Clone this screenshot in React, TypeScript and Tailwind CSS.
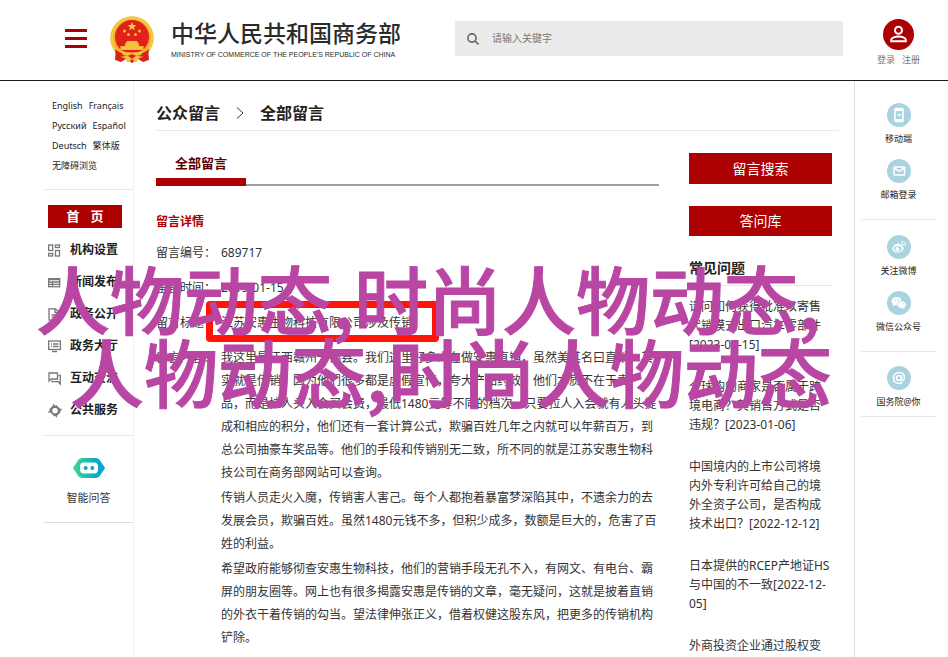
import React from "react";

const cjk = "font-['Noto_Sans','Noto_Sans_CJK_SC',sans-serif]";

function Emblem() {
  return (
    <svg viewBox="0 0 44 47" className="h-[47px] w-11 shrink-0" role="img" aria-label="国徽">
      <path d="M6 32 L5 44 L11 46 L16 43 L22 47 L28 43 L33 46 L39 44 L38 32Z" fill="#d8221c" />
      <circle cx="22" cy="22" r="21.7" fill="#eeb52a" />
      <circle cx="22" cy="22" r="20" fill="none" stroke="#f6cf45" strokeWidth="2" strokeDasharray="3.500 .6" />
      <circle cx="22" cy="21" r="17" fill="#e3211b" />
      <path d="M5 33 Q13 40 22 37 Q31 40 39 33 L38 39 Q30 42 27 39 L22 43 L17 39 Q14 42 6 39Z" fill="#d8221c" />
      <path d="M22 6l1.200 3 3.100.2-2.400 2 .8 3.100-2.700-1.700-2.700 1.700.8-3.100-2.400-2 3.100-.2z" fill="#f8d146" />
      <g fill="#f3c13a">
        <circle cx="14.500" cy="15" r="1.500" />
        <circle cx="29.500" cy="15" r="1.500" />
        <circle cx="18.500" cy="18.500" r="1.500" />
        <circle cx="25.500" cy="18.500" r="1.500" />
        <path d="M17 25h10l1.500 2.500h-13zM15 27.500h14v2.500H15zM10.500 30h23v4h-23z" />
      </g>
      <path d="M10 34Q22 39 34 34L31 39Q26 41 22 38 Q18 41 13 39Z" fill="#f3c13a" />
      <path d="M16 42q3-2 5 1l-1 3h-3zM28 42q-3-2-5 1l1 3h3z" fill="#f3c13a" />
    </svg>
  );
}

function PersonIcon() {
  return (
    <svg viewBox="0 0 31 31" className="size-[31px]" aria-hidden="true">
      <circle cx="15.500" cy="15.500" r="15.500" fill="#ad0000" />
      <circle cx="15.500" cy="11.300" r="3.500" fill="none" stroke="#fff" strokeWidth="2" />
      <path d="M8.200 22.300v-1.500c0-2 4.200-3.300 7.300-3.300s7.300 1.300 7.300 3.300v1.500z" fill="none" stroke="#fff" strokeWidth="2" />
    </svg>
  );
}

const navIcons: Record<string, React.ReactNode> = {
  grid: (
    <g>
      <rect x=".7" y="1" width="4" height="5.500" />
      <rect x="7.500" y="1" width="4" height="2.500" />
      <rect x=".7" y="9.500" width="4" height="2.500" />
      <rect x="7.500" y="6.500" width="4" height="5.500" />
    </g>
  ),
  news: (
    <g>
      <rect x=".7" y="2.700" width="11" height="8" />
      <path d="M1 3.700h10.500M1 6h10.500M1 8.300h10.500M4.500 6v4" />
    </g>
  ),
  doc: (
    <g>
      <path d="M1 .8h6.500L11 4v8.200H1z" />
      <path d="M7 1v3.500h4M3.500 7h4.500M3.500 9.200h4.500" />
    </g>
  ),
  hall: (
    <g>
      <rect x=".7" y="1" width="11.600" height="8.500" />
      <path d="M3 4h1M5 4h5.500M3 6.500h1M5 6.500h5.500M4 11.500h5" />
    </g>
  ),
  chat: (
    <g>
      <path d="M1 9V1h8.500v6H3z" />
      <path d="M10.500 3.500h1.800V12l-2-2.300H4V8.500" />
    </g>
  ),
  service: (
    <g fill="#777" stroke="none">
      <path d="M1 5.500L5 1.500V-.5L8.500 3 6.500 5V3.800L3.500 6.800z" />
      <path d="M8 .8L12 4.800h2.500L11 8.300 9 6.300h1.200L6.800 3z" />
      <path d="M13 7.800L9 11.800v2L5.500 10.500l2-2v1.200l3.200-3.200z" />
      <path d="M6.500 12.500L2.500 8.500H-.5L3.200 5l2 2H4l3.500 3.500z" />
      <circle cx="7" cy="6.700" r="2.600" fill="#fff" />
    </g>
  ),
};

const nav = [
  ["grid", "机构设置"],
  ["news", "新闻发布"],
  ["doc", "政务公开"],
  ["hall", "政务大厅"],
  ["chat", "互动交流"],
  ["service", "公共服务"],
];

const languages = [["English", "Français"], ["Русский", "Español"], ["Deutsch", "繁体版"], ["无障碍浏览"]];

function Sidebar() {
  return (
    <aside className="flex w-[134px] shrink-0 flex-col border-r border-[#f0f0f0] pl-11">
      <div className="flex h-[109px] flex-col border-b border-[#e6e6e6] pt-[15px] pl-2 text-[9px] leading-5 text-[#222]">
        {languages.map((row) => (
          <div key={row[0]} className="flex gap-[6px] whitespace-nowrap">
            {row.map((l) => (
              <a key={l} href="#">{l}</a>
            ))}
          </div>
        ))}
      </div>
      <nav className="border-b border-[#e6e6e6] pt-[15px] pb-[9px] pl-1">
        <a href="#" className="mb-[6px] flex h-[23px] w-[74px] items-center justify-center gap-[11px] bg-[#ad0000] text-[13px] font-bold text-white">
          <span>首</span>
          <span>页</span>
        </a>
        {nav.map(([icon, label]) => (
          <a key={label} href="#" className="flex h-8 items-center gap-[9px] text-xs font-bold text-[#222]">
            <svg viewBox="0 0 13 13" className="size-[13px] overflow-visible" fill="none" stroke="#777" strokeWidth="1.300" aria-hidden="true">
              {navIcons[icon]}
            </svg>
            {label}
          </a>
        ))}
      </nav>
      <a href="#" className="flex h-[87px] flex-col items-center border-b border-[#dcdcdc] pt-[22px] text-[11px] text-[#333]">
        <svg viewBox="0 0 32 20" className="mb-3 h-5 w-8" aria-hidden="true">
          <defs>
            <linearGradient id="bot">
              <stop offset="0" stopColor="#45d68a" />
              <stop offset=".65" stopColor="#0aaec6" />
              <stop offset="1" stopColor="#06a8d0" />
            </linearGradient>
          </defs>
          <path d="M9 0h14q2 0 3.500 1.800L31.500 9q.8 1 0 2l-5 7.200Q25 20 23 20H9q-2 0-3.500-1.800L.5 11q-.8-1 0-2l5-7.200Q7 0 9 0z" fill="url(#bot)" />
          <rect x="7" y="4.500" width="18" height="11" rx="4" fill="#fff" />
          <circle cx="12.700" cy="10" r="2" fill="#0aa9bd" />
          <circle cx="19.300" cy="10" r="2" fill="#0aa9bd" />
        </svg>
        智能问答
      </a>
    </aside>
  );
}

const badges: Record<string, React.ReactNode> = {
  phone: (
    <g>
      <rect x="8" y="5.500" width="8" height="13" rx="1" fill="none" stroke="#fff" strokeWidth="1.600" />
      <path d="M8 7h8M8 17h8" stroke="#fff" strokeWidth="2" />
      <path d="M10 13.500q.3-2.300 2.300-2.300v-1l2 1.700-2 1.700v-1q-1.500 0-2.300.9z" fill="#fff" />
    </g>
  ),
  mail: (
    <g fill="none" stroke="#fff" strokeWidth="1.500">
      <rect x="7" y="8" width="10.500" height="8" rx=".5" />
      <path d="M7.300 9l5 3.300 5-3.300" />
    </g>
  ),
  weibo: (
    <g>
      <path d="M10.500 8.300c1.500-.5 2.300.2 1.900 1.600 1.900-.7 3.400-.2 2.800 1.500 1.300.4 1.800 1.300 1.500 2.400-.6 2.200-3.300 3.700-6.100 3.700-3 0-5.300-1.400-5.300-3.500 0-2 2.800-4.900 5.200-5.700z" fill="#fff" />
      <ellipse cx="10.700" cy="13.800" rx="3.900" ry="2.700" fill="#a9d4df" />
      <circle cx="10.300" cy="14" r="2" fill="#fff" />
      <path d="M14.300 8.700q2.300-.3 2 2M14.300 6.700q4.600-.4 4.100 4.200" fill="none" stroke="#fff" strokeWidth="1" />
    </g>
  ),
  wechat: (
    <g>
      <ellipse cx="9.600" cy="10.200" rx="5" ry="4.300" fill="#fff" />
      <path d="M6 13l-.6 2.300 2.800-1.300z" fill="#fff" />
      <ellipse cx="14.800" cy="13.700" rx="4.500" ry="3.800" fill="#fff" stroke="#a9d4df" strokeWidth=".7" />
      <path d="M17 16.500l.7 1.700-2.300-1z" fill="#fff" />
      <g fill="#a9d4df">
        <circle cx="8" cy="9" r=".8" />
        <circle cx="11.200" cy="9" r=".8" />
        <circle cx="13.400" cy="12.800" r=".6" />
        <circle cx="16.200" cy="12.800" r=".6" />
      </g>
    </g>
  ),
  at: (
    <g fill="none" stroke="#fff" strokeWidth="1.500">
      <circle cx="12" cy="12" r="2.500" />
      <path d="M14.700 9.500l-.5 3.500q0 1.700 1.400 1.500 1.900-.5 1.900-3c0-3-2.300-5-5.300-5-3.300 0-5.700 2.500-5.700 5.700 0 3 2.300 5.200 5.500 5.200q1.900 0 3.300-.9" />
    </g>
  ),
};

function Badge({ icon, label }: { icon: string; label: string }) {
  return (
    <a href="#" className="flex h-14 flex-col items-center gap-[6px] text-[9px] leading-3 whitespace-nowrap text-[#222]">
      <svg viewBox="0 0 24 24" className="size-6" aria-hidden="true">
        <circle cx="12" cy="12" r="12" fill="#a9d4df" />
        {badges[icon]}
      </svg>
      {label}
    </a>
  );
}

function Rail() {
  return (
    <aside className="w-[94px] shrink-0 border-l border-[#dcdcdc] pr-3 pl-[6px]">
      <div className="h-[139px] border-b border-[#e6e6e6] pt-[22px]">
        <Badge icon="phone" label="移动端" />
        <Badge icon="mail" label="邮箱登录" />
      </div>
      <div className="h-[132px] border-b border-[#e6e6e6] pt-[15px]">
        <Badge icon="weibo" label="关注微博" />
        <Badge icon="wechat" label="微信公众号" />
      </div>
      <div className="h-[65px] border-b border-[#e6e6e6] pt-[14px]">
        <Badge icon="at" label="国务院@你" />
      </div>
    </aside>
  );
}

const faqs = [
  "请问如何获得批准以寄售代销模式出口汽车零部件[2023-02-15]",
  "全球购的商家是否属于跨境电商？其销售方式是否违规？[2023-01-06]",
  "中国境内的上市公司将境内外专利许可给自己的境外全资子公司，是否构成技术出口？[2022-12-12]",
  "日本提供的RCEP产地证HS与中国的不一致[2022-12-05]",
  "外商投资企业通过股权变",
];

const paragraphs = [
  "我这里是江西赣州于都县。我们这里好多人在做安惠直销，虽然美其名曰直销，其实就是传销，因为他们很多都是虚假宣传，夸大产品药效，他们本质不在于卖产品，而是拉人头入会买会费，最低1480元等不同的档次，只要拉人入会就有人头提成和相应的积分，他们还有一套计算公式，欺骗百姓几年之内就可以年薪百万，到总公司抽豪车奖品等。他们的手段和传销别无二致，所不同的就是江苏安惠生物科技公司在商务部网站可以查询。",
  "传销人员走火入魔，传销害人害己。每个人都抱着暴富梦深陷其中，不遗余力的去发展会员，欺骗百姓。虽然1480元钱不多，但积少成多，数额是巨大的，危害了百姓的利益。",
  "希望政府能够彻查安惠生物科技，他们的营销手段无孔不入，有网文、有电台、霸屏的朋友圈等。网上也有很多揭露安惠是传销的文章，毫无疑问，这就是披着直销的外衣干着传销的勾当。望法律伸张正义，借着权健这股东风，把更多的传销机构铲除。",
];

function Field({ label, children }: { label: string; children: React.ReactNode }) {
  return (
    <div className="flex">
      <dt className="w-[65px] shrink-0">{label}：</dt>
      <dd className="min-w-0 flex-1">{children}</dd>
    </div>
  );
}

function Message() {
  return (
    <section className="min-w-0 flex-1">
      <div className="flex h-[55px] items-end">
        <div className="w-[90px] border-b-8 border-[#ad0000] pb-[5px] text-center">
          <h2 className="text-[13px] leading-5 font-bold text-[#5c0000]">全部留言</h2>
        </div>
        <div className="flex-1 border-b-2 border-[#9f9f9f]" />
      </div>
      <h3 className="mt-6 text-xs leading-6 font-bold text-[#ad0000]">留言详情</h3>
      <dl className="mt-[7px] flex flex-col gap-3 text-xs leading-[23px] text-[#333]">
        <Field label="留言编号">689717</Field>
        <Field label="留言时间">2019-01-15</Field>
        <Field label="留言标题">
          <span className="relative">
            江苏安惠生物科技有限公司涉及传销
            <span className="absolute -top-[13px] -left-[15px] h-[41px] w-[233px] rounded border-7 border-[#ff1507]" />
          </span>
        </Field>
        <Field label="留言内容">
          <div className="flex flex-col gap-[2px]">
            {paragraphs.map((p) => (
              <p key={p}>{p}</p>
            ))}
          </div>
        </Field>
      </dl>
    </section>
  );
}

function Questions() {
  return (
    <aside className="w-[143px] shrink-0 pt-[22px]">
      <button className="block h-[31px] w-full bg-[#ad0000] text-sm text-white">留言搜索</button>
      <button className="mt-[22px] block h-[30px] w-full bg-[#ad0000] text-sm text-white">答问库</button>
      <h2 className="mt-[22px] border-b border-[#e6e6e6] pb-[7px] text-sm leading-5 font-bold text-[#222]">常见问题</h2>
      <ul className="mt-[11px] flex flex-col gap-[23px] text-xs leading-[19px] text-[#333]">
        {faqs.map((q) => (
          <li key={q}>
            <a href="#">{q}</a>
          </li>
        ))}
      </ul>
    </aside>
  );
}

export default function App() {
  return (
    <div className={`relative flex min-h-screen flex-col overflow-hidden bg-white ${cjk}`} lang="zh-CN">
      <header className="flex h-[81px] shrink-0 items-start border-b border-[#1d1d1d] pr-[28px] pl-[65px]">
        <button aria-label="菜单" className="mt-[29px] flex w-[22px] flex-col gap-[5px]">
          <span className="h-[3px] w-full bg-[#ad0000]" />
          <span className="h-[3px] w-full bg-[#ad0000]" />
          <span className="h-[3px] w-full bg-[#ad0000]" />
        </button>
        <a href="#" className="mt-4 ml-[23px] flex">
          <Emblem />
          <span className="ml-[17px] flex flex-col whitespace-nowrap text-[#2b2b2b]">
            <span className="text-[23px] leading-[34px] font-medium">中华人民共和国商务部</span>
            <span className="font-['Liberation_Sans',sans-serif] text-[7px] leading-[10px]">MINISTRY OF COMMERCE OF THE PEOPLE'S REPUBLIC OF CHINA</span>
          </span>
        </a>
        <label className="mt-[21px] mr-[34px] ml-auto flex h-[35px] w-[388px] items-center bg-[#ebebeb] pl-3">
          <svg viewBox="0 0 12 12" className="size-3" fill="none" stroke="#666" strokeWidth="1.600" aria-hidden="true">
            <circle cx="5" cy="5" r="4.100" />
            <path d="M8 8l3.500 3.500" />
          </svg>
          <input type="search" aria-label="请输入关键字" placeholder="请输入关键字" className="ml-[13px] min-w-0 flex-1 bg-transparent text-[10px] outline-none placeholder:text-[#777]" />
        </label>
        <div className="mt-[19px] flex flex-col items-center text-[9px] leading-3 text-[#777]">
          <PersonIcon />
          <span className="mt-1 flex gap-[7px] whitespace-nowrap">
            <a href="#">登录</a>
            <a href="#">注册</a>
          </span>
        </div>
      </header>
      <div className="flex flex-1">
        <Sidebar />
        <main className="min-w-0 flex-1 pr-[15px] pl-[22px]">
          <div className="flex h-[50px] items-center border-b border-[#e9e9e9] pt-[14px] text-base font-bold text-[#222]">
            <a href="#">公众留言</a>
            <svg viewBox="0 0 8 12" className="mx-[16px] h-3 w-2" fill="none" stroke="#333" aria-hidden="true">
              <path d="M1 .5l6 5.500-6 5.500" />
            </svg>
            <h1>全部留言</h1>
          </div>
          <div className="flex gap-[30px] pr-[7px]">
            <Message />
            <Questions />
          </div>
        </main>
        <Rail />
      </div>
      <div className="pointer-events-none absolute top-[260px] left-[36px] font-['Noto_Sans_CJK_SC',sans-serif] text-[74px] leading-[73px] font-medium whitespace-nowrap text-[#b946a3] [-webkit-text-stroke:1px_#b946a3]">
        <p>人物动态,时尚人物动态,</p>
        <p className="pl-[34px]">人物动态,时尚人物动态</p>
      </div>
    </div>
  );
}
